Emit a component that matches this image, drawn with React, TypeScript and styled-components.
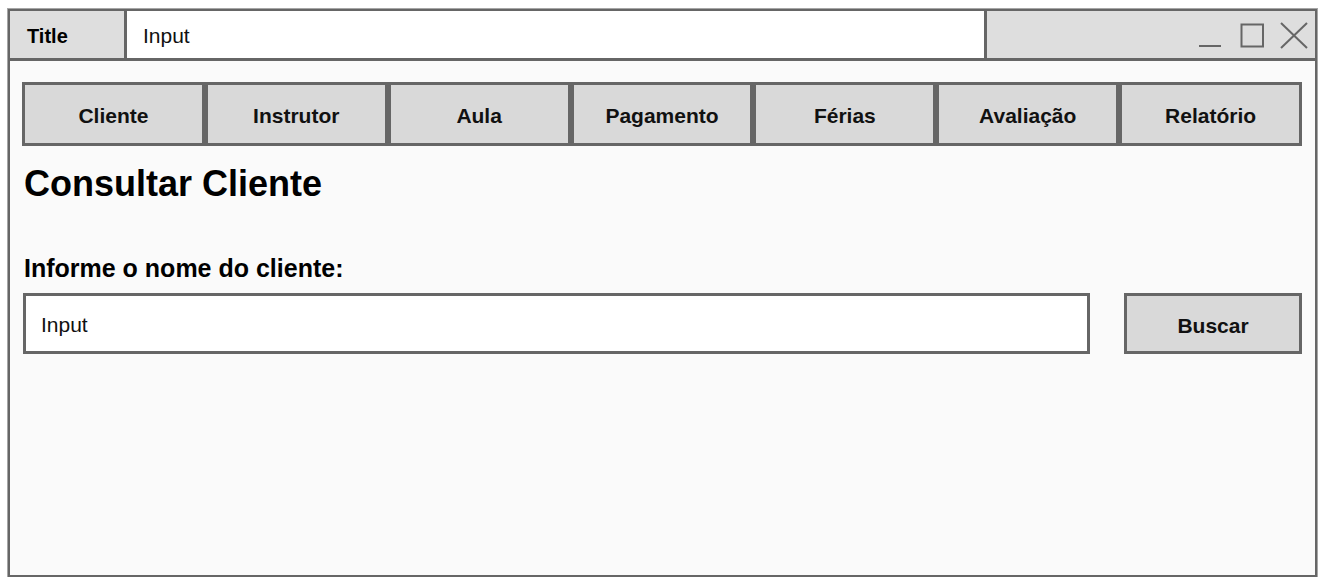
import React from 'react';
import styled, { createGlobalStyle } from 'styled-components';

const GlobalStyle = createGlobalStyle`
    html, body {
        margin: 0;
        padding: 0;
        background: #ffffff;
    }
    body {
        font-family: "Liberation Sans", Arial, Helvetica, sans-serif;
        color: #000;
    }
`;

const Window = styled.div`
    box-sizing: border-box;
    width: 1309px;
    height: 568px;
    margin: 9px 0 0 8px;
    border: 2px solid #666666;
    box-shadow: 0 0 0 1px #a6a6a6;
    background: #fafafa;
    display: flex;
    flex-direction: column;
`;

const TitleBar = styled.div`
    height: 47px;
    display: flex;
    border-bottom: 3px solid #666666;
    flex-shrink: 0;
`;

const TitleCell = styled.div`
    width: 117px;
    display: flex;
    align-items: center;
    padding: 4px 0 0 17px;
    box-sizing: border-box;
    background: #dedede;
    border-right: 3px solid #666666;
    font-size: 20px;
    font-weight: 700;
`;

const TitleInput = styled.div`
    width: 860px;
    display: flex;
    align-items: center;
    padding: 2px 0 0 16px;
    box-sizing: border-box;
    background: #ffffff;
    border-right: 3px solid #666666;
    font-size: 21px;
    color: #111;
`;

const WindowControls = styled.div`
    flex: 1;
    display: flex;
    align-items: center;
    justify-content: flex-end;
    padding-right: 5px;
    background: #dedede;
`;

const Content = styled.div`
    flex: 1;
    padding: 21px 13px 0 12px;
    display: flex;
    flex-direction: column;
`;

const NavBar = styled.nav`
    display: grid;
    grid-template-columns: repeat(7, 1fr);
    height: 64px;
`;

const NavButton = styled.button`
    box-sizing: border-box;
    border: 3px solid #666666;
    background: #d9d9d9;
    font-family: inherit;
    font-size: 21px;
    font-weight: 700;
    color: #111;
    padding: 3px 0 0;
    cursor: pointer;
`;

const Form = styled.section`
    padding-left: 1px;
    display: flex;
    flex-direction: column;
`;

const Heading = styled.h1`
    margin: 18px 0 0;
    font-size: 36px;
    line-height: 40px;
    font-weight: 700;
    padding-left: 1px;
`;

const Label = styled.label`
    margin-top: 49px;
    font-size: 25px;
    line-height: 30px;
    font-weight: 700;
    padding-left: 1px;
`;

const SearchRow = styled.div`
    margin-top: 10px;
    display: flex;
    gap: 34px;
    height: 61px;
`;

const SearchField = styled.div`
    flex: 1;
    box-sizing: border-box;
    border: 3px solid #666666;
    background: #ffffff;
    display: flex;
    align-items: center;
    padding: 2px 0 0 15px;
    font-size: 21px;
    color: #111;
`;

const SearchButton = styled.button`
    width: 178px;
    box-sizing: border-box;
    border: 3px solid #666666;
    background: #d9d9d9;
    font-family: inherit;
    font-size: 21px;
    font-weight: 700;
    color: #111;
    padding: 5px 0 0;
    cursor: pointer;
`;

const navItems = ['Cliente', 'Instrutor', 'Aula', 'Pagamento', 'Férias', 'Avaliação', 'Relatório'];

const ControlIcons: React.FC = () => (
    <svg width="114" height="32" viewBox="0 0 114 32" fill="none" stroke="#666666" strokeWidth="2">
        <line x1="3" y1="27" x2="25" y2="27" />
        <rect x="45.5" y="5.5" width="21.5" height="22" />
        <line x1="85" y1="4" x2="111" y2="29" />
        <line x1="111" y1="4" x2="85" y2="29" />
    </svg>
);

const App: React.FC = () => {
    return (
        <>
            <GlobalStyle />
            <Window>
                <TitleBar>
                    <TitleCell>Title</TitleCell>
                    <TitleInput>Input</TitleInput>
                    <WindowControls>
                        <ControlIcons />
                    </WindowControls>
                </TitleBar>
                <Content>
                    <NavBar>
                        {navItems.map((item) => (
                            <NavButton key={item}>{item}</NavButton>
                        ))}
                    </NavBar>
                    <Form>
                        <Heading>Consultar Cliente</Heading>
                        <Label>Informe o nome do cliente:</Label>
                        <SearchRow>
                            <SearchField>Input</SearchField>
                            <SearchButton>Buscar</SearchButton>
                        </SearchRow>
                    </Form>
                </Content>
            </Window>
        </>
    );
};

export default App;
